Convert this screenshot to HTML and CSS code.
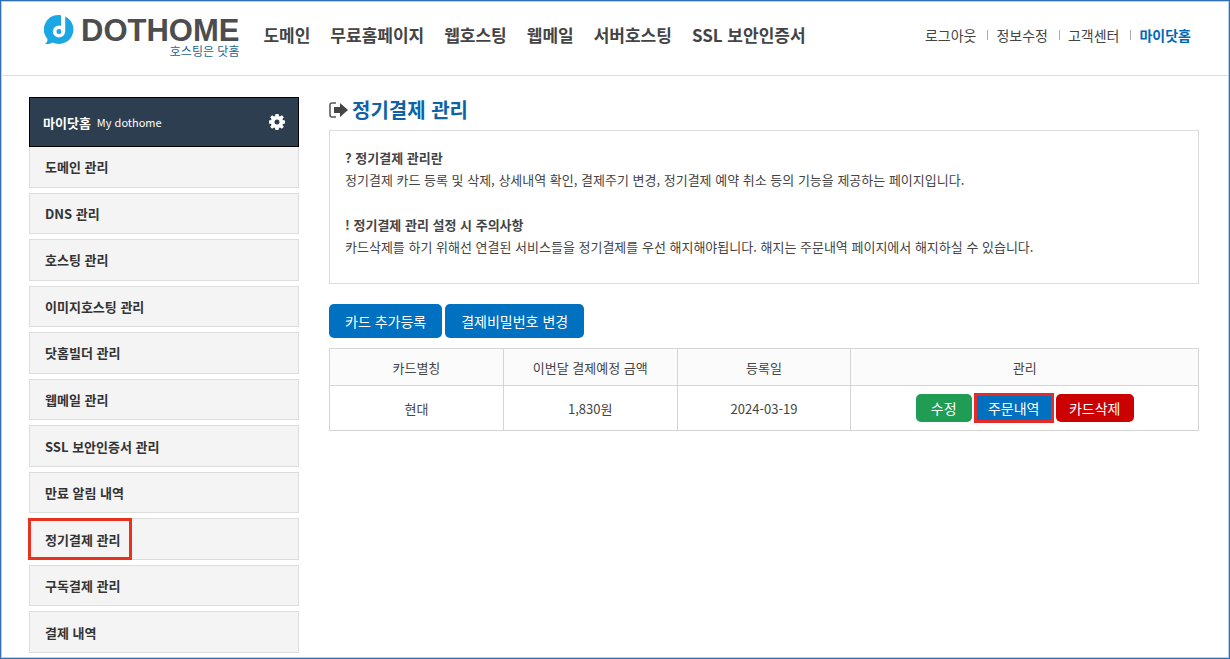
FILE: index.html
```html
<!DOCTYPE html>
<html lang="ko">
<head>
  <meta charset="UTF-8">
  <meta name="viewport" content="width=device-width, initial-scale=1.0">
  <title>정기결제 관리</title>
  <link rel="stylesheet" href="styles.css">
</head>
<body>
  <header class="header">
    <a href="#" class="logo">
      <svg class="logo-mark" viewBox="0 0 30 32" aria-hidden="true">
        <path fill="#1ba7e2" d="M15 1a14.500 14.500 0 1 1-6.500 27.500C6 30 3 30.500 1 29.500c2-1 2.500-2.500 2.500-4.500A14.500 14.500 0 0 1 15 1z"/>
        <circle cx="15" cy="17.500" r="4.300" fill="none" stroke="#fff" stroke-width="3.600"/>
        <path fill="#fff" d="M17 0h4.200v17.500H17z"/>
      </svg>
      <span class="logo-text">
        <strong>DOTHOME</strong>
        <small>호스팅은 닷홈</small>
      </span>
    </a>
    <nav class="gnb">
      <a href="#">도메인</a>
      <a href="#">무료홈페이지</a>
      <a href="#">웹호스팅</a>
      <a href="#">웹메일</a>
      <a href="#">서버호스팅</a>
      <a href="#">SSL 보안인증서</a>
    </nav>
    <ul class="util">
      <li><a href="#">로그아웃</a></li>
      <li><a href="#">정보수정</a></li>
      <li><a href="#">고객센터</a></li>
      <li><a href="#" class="active">마이닷홈</a></li>
    </ul>
  </header>

  <div class="container">
    <aside class="sidebar">
      <div class="sidebar-title">
        <strong>마이닷홈</strong>
        <span>My dothome</span>
        <svg class="gear" viewBox="0 0 16 16" aria-hidden="true">
          <path fill="#fff" fill-rule="evenodd" d="M6.500 0h3l.5 2.100 1 .4 1.900-1.200 1.900 1.900-1.300 1.800.4 1 2.100.5v3l-2.100.5-.4 1 1.300 1.800-1.900 1.900-1.900-1.200-1 .4-.5 2.100h-3L6 13.900l-1-.4-1.900 1.200-1.900-1.900L2.500 11l-.4-1L0 9.500v-3L2.100 6l.4-1-1.300-1.800 1.900-1.900L5 2.500l1-.4zM8 5.500a2.500 2.500 0 1 0 0 5 2.500 2.500 0 0 0 0-5z"/>
        </svg>
      </div>
      <ul class="menu">
        <li><a href="#">도메인 관리</a></li>
        <li><a href="#">DNS 관리</a></li>
        <li><a href="#">호스팅 관리</a></li>
        <li><a href="#">이미지호스팅 관리</a></li>
        <li><a href="#">닷홈빌더 관리</a></li>
        <li><a href="#">웹메일 관리</a></li>
        <li><a href="#">SSL 보안인증서 관리</a></li>
        <li><a href="#">만료 알림 내역</a></li>
        <li class="marked"><a href="#">정기결제 관리</a></li>
        <li><a href="#">구독결제 관리</a></li>
        <li><a href="#">결제 내역</a></li>
      </ul>
    </aside>

    <main class="content">
      <h1>
        <svg class="title-icon" viewBox="0 0 19 16" aria-hidden="true">
          <path fill="none" stroke="#555" stroke-width="1.500" d="M7 1H3a2 2 0 0 0-2 2v10a2 2 0 0 0 2 2h4"/>
          <path fill="#444" d="M5 5h6V1l8 7-8 7v-4H5z"/>
        </svg>
        정기결제 관리
      </h1>

      <section class="info">
        <h2>? 정기결제 관리란</h2>
        <p>정기결제 카드 등록 및 삭제, 상세내역 확인, 결제주기 변경, 정기결제 예약 취소 등의 기능을 제공하는 페이지입니다.</p>
        <h2>! 정기결제 관리 설정 시 주의사항</h2>
        <p>카드삭제를 하기 위해선 연결된 서비스들을 정기결제를 우선 해지해야됩니다. 해지는 주문내역 페이지에서 해지하실 수 있습니다.</p>
      </section>

      <div class="actions">
        <button type="button" class="btn btn-large">카드 추가등록</button>
        <button type="button" class="btn btn-large">결제비밀번호 변경</button>
      </div>

      <table class="cards">
        <thead>
          <tr>
            <th>카드별칭</th>
            <th>이번달 결제예정 금액</th>
            <th>등록일</th>
            <th class="col-manage">관리</th>
          </tr>
        </thead>
        <tbody>
          <tr>
            <td>현대</td>
            <td>1,830원</td>
            <td>2024-03-19</td>
            <td>
              <div class="row-actions">
                <button type="button" class="btn btn-edit">수정</button>
                <button type="button" class="btn btn-order">주문내역</button>
                <button type="button" class="btn btn-delete">카드삭제</button>
              </div>
            </td>
          </tr>
        </tbody>
      </table>
    </main>
  </div>
</body>
</html>
```
FILE: styles.css
```css
*,
*::before,
*::after {
  box-sizing: border-box;
}
body {
  display: flex;
  flex-direction: column;
  min-height: 100vh;
  margin: 0;
  border: 1px solid #2f6eb5;
  box-shadow: inset 0 0 0 1px #b5d3ee;
  font-family: "Noto Sans CJK JP", "Noto Sans CJK KR", sans-serif;
  font-size: 13px;
  color: #444;
  background-color: #fff;
}
a {
  color: inherit;
  text-decoration: none;
}
ul {
  margin: 0;
  padding: 0;
  list-style: none;
}

/* Header */
.header {
  display: flex;
  align-items: flex-start;
  height: 75px;
  padding: 13px 38px 0 43px;
  border-bottom: 1px solid #ddd;
}
.logo {
  display: flex;
  align-items: flex-start;
  gap: 7px;
}
.logo-mark {
  width: 30px;
  height: 32px;
}
.logo-text {
  display: flex;
  flex-direction: column;
  align-items: flex-end;
}
.logo-text strong {
  font-family: "Liberation Sans", Arial, sans-serif;
  font-size: 31px;
  line-height: 33px;
  color: #4d4d4f;
}
.logo-text small {
  font-size: 12px;
  line-height: 8px;
  color: #22658f;
}
.gnb {
  display: flex;
  gap: 20px;
  margin-left: 24px;
  font-size: 17px;
  font-weight: bold;
  line-height: 42px;
  color: #444;
}
.util {
  display: flex;
  margin-left: auto;
  font-size: 14px;
  line-height: 42px;
}
.util li {
  display: flex;
  align-items: center;
}
.util li + li::before {
  content: "";
  width: 1px;
  height: 10px;
  margin: 0 8px 0 11px;
  background-color: #aaa;
}
.util .active {
  font-weight: bold;
  color: #0068b7;
}

/* Page */
.container {
  flex: 1;
  display: flex;
  gap: 30px;
  padding: 21px 30px 5px 28px;
}
.sidebar {
  display: flex;
  flex-direction: column;
  width: 270px;
}
.sidebar-title {
  display: flex;
  align-items: center;
  gap: 6px;
  height: 50px;
  padding: 0 13px;
  border: 1px solid #000;
  color: #fff;
  background-color: #2c3e50;
}
.sidebar-title span {
  font-size: 11px;
}
.gear {
  width: 16px;
  height: 16px;
  margin-left: auto;
}
.menu {
  flex: 1;
  display: flex;
  flex-direction: column;
  gap: 5px;
}
.menu li {
  flex: 1;
  display: flex;
  position: relative;
  border: 1px solid #ddd;
  background-color: #f4f4f4;
}
.menu li:first-child {
  border-top: 0;
}
.menu a {
  flex: 1;
  display: flex;
  align-items: center;
  padding: 0 15px;
  font-weight: bold;
  color: #333;
}
/* red frame over the current item */
.marked::after {
  content: "";
  position: absolute;
  top: -1px;
  bottom: -1px;
  left: -2px;
  width: 104px;
  border: 3px solid #e8321f;
}

.content {
  flex: 1;
}
h1 {
  display: flex;
  align-items: center;
  gap: 4px;
  margin: 0 0 8px;
  font-size: 20px;
  line-height: 25px;
  color: #0f62a5;
}
.title-icon {
  width: 19px;
  height: 16px;
}
.info {
  margin-bottom: 20px;
  padding: 16px 15px 25px;
  border: 1px solid #ddd;
  line-height: 22px;
}
.info h2 {
  margin: 0;
  font-size: 13px;
}
.info p {
  margin: 0;
}
.info p + h2 {
  margin-top: 23px;
}

/* Buttons */
.btn {
  height: 28px;
  padding: 0 13px;
  border: 0;
  border-radius: 5px;
  font-family: inherit;
  font-size: 14px;
  color: #fff;
  background-color: #0070c0;
  cursor: pointer;
}
.btn-large {
  height: 34px;
  padding: 0 16px;
}
.actions,
.row-actions {
  display: flex;
  gap: 3px;
}
.actions {
  margin-bottom: 10px;
}
.row-actions {
  justify-content: center;
}
.btn-edit {
  min-width: 56px;
  background-color: #1f9d55;
}
.btn-order {
  min-width: 78px;
  border-radius: 0;
  outline: 3px solid #e62a2a;
  outline-offset: -2px;
}
.btn-delete {
  min-width: 78px;
  background-color: #c00;
}

/* Card list */
.cards {
  width: 100%;
  table-layout: fixed;
  border-collapse: collapse;
  text-align: center;
}
.cards th,
.cards td {
  padding: 0;
  border: 1px solid #d5d5d5;
}
.cards th {
  height: 37px;
  font-weight: normal;
  background-color: #fbfbfb;
}
.cards td {
  height: 45px;
}
.col-manage {
  width: 40%;
}
```
